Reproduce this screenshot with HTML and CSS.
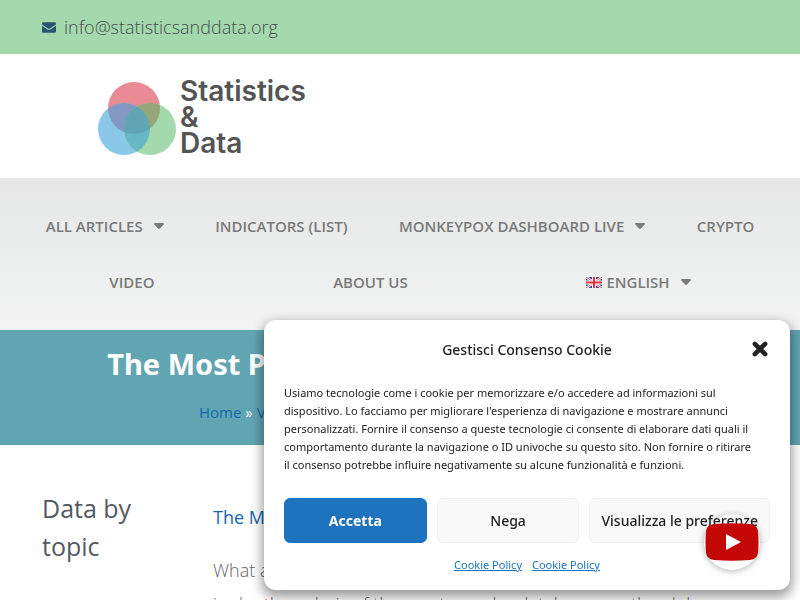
FILE: index.html
```html
<!DOCTYPE html>
<html lang="en">
<head>
<meta charset="utf-8">
<title>Statistics &amp; Data</title>
<link rel="stylesheet" href="styles.css">
</head>
<body>
<div class="page">
  <div class="topbar">
    <svg class="envelope" viewBox="0 0 512 384" aria-hidden="true"><path d="M48 0h416a48 48 0 0 1 48 48v32L290 226q-34 22-68 0L0 80V48A48 48 0 0 1 48 0zM0 128l206 138q50 32 100 0l206-138v208a48 48 0 0 1-48 48H48a48 48 0 0 1-48-48z"/></svg>
    <span>info@statisticsanddata.org</span>
  </div>
  <header class="brand">
    <svg class="brand-mark" viewBox="0 0 80 76" aria-hidden="true">
      <circle cx="37" cy="28" r="26" fill="#e98b95"/>
      <circle cx="27" cy="49" r="26" fill="#89c8e8"/>
      <circle cx="53" cy="49" r="26" fill="#a3d9ac"/>
      <clipPath id="red"><circle cx="37" cy="28" r="26"/></clipPath>
      <clipPath id="blue"><circle cx="27" cy="49" r="26"/></clipPath>
      <circle cx="27" cy="49" r="26" fill="#8399c3" clip-path="url(#red)"/>
      <circle cx="53" cy="49" r="26" fill="#96a679" clip-path="url(#red)"/>
      <g clip-path="url(#blue)">
        <circle cx="53" cy="49" r="26" fill="#66b9c4"/>
        <circle cx="53" cy="49" r="26" fill="#61a5b3" clip-path="url(#red)"/>
      </g>
    </svg>
    <div class="brand-name">Statistics<br>&amp;<br>Data</div>
  </header>
  <nav class="menu">
    <ul>
      <li><a href="#">ALL ARTICLES <svg class="caret" viewBox="0 0 10 6" aria-hidden="true"><path d="M1 0h8q1.500 .3.600 1.500L6 5.500q-1 .8-2 0L.4 1.500Q-.5.3 1 0z"/></svg></a></li>
      <li><a href="#">INDICATORS (LIST)</a></li>
      <li><a href="#">MONKEYPOX DASHBOARD LIVE <svg class="caret" viewBox="0 0 10 6" aria-hidden="true"><path d="M1 0h8q1.500.3.600 1.500L6 5.500q-1 .8-2 0L.4 1.500Q-.5.3 1 0z"/></svg></a></li>
      <li><a href="#">CRYPTO</a></li>
      <li><a href="#">VIDEO</a></li>
      <li><a href="#">ABOUT US</a></li>
      <li><a href="#"><svg class="flag" viewBox="0 0 16 11" aria-hidden="true"><path fill="#28489c" d="M0 0h16v11H0z"/><path stroke="#fff" stroke-width="2.600" d="M0 0l16 11M16 0L0 11"/><path stroke="#e0404c" stroke-width=".9" d="M0 0l16 11M16 0L0 11"/><path stroke="#fff" stroke-width="4" d="M8 0v11M0 5.500h16"/><path stroke="#e8303c" stroke-width="2" d="M8 0v11M0 5.500h16"/></svg>ENGLISH <svg class="caret" viewBox="0 0 10 6" aria-hidden="true"><path d="M1 0h8q1.500.3.600 1.500L6 5.500q-1 .8-2 0L.4 1.500Q-.5.3 1 0z"/></svg></a></li>
    </ul>
  </nav>
  <section class="hero">
    <h1>The Most Popular Databases – 2006/2023</h1>
    <p><a href="#">Home</a> » <a href="#">Video</a> » The Most Popular Databases – 2006/2023</p>
  </section>
  <main class="content">
    <aside><h2>Data by topic</h2></aside>
    <article>
      <p><a href="#">The Most Popular Databases – 2006/2023</a></p>
      <p>What are the most popular databases? An<br>in depth analysis of the most popular databases on the globe</p>
    </article>
  </main>
</div>

<div class="consent" role="dialog" aria-labelledby="consent-title">
  <div class="consent-head">
    <h2 id="consent-title">Gestisci Consenso Cookie</h2>
    <button class="close" type="button" aria-label="Chiudi"><svg viewBox="0 0 14 14" aria-hidden="true"><path d="M2.500 2.500l9 9M11.500 2.500l-9 9"/></svg></button>
  </div>
  <p class="consent-text">Usiamo tecnologie come i cookie per memorizzare e/o accedere ad informazioni sul<br>dispositivo. Lo facciamo per migliorare l'esperienza di navigazione e mostrare annunci<br>personalizzati. Fornire il consenso a queste tecnologie ci consente di elaborare dati quali il<br>comportamento durante la navigazione o ID univoche su questo sito. Non fornire o ritirare<br>il consenso potrebbe influire negativamente su alcune funzionalità e funzioni.</p>
  <div class="consent-actions">
    <button class="action accept" type="button">Accetta</button>
    <button class="action" type="button">Nega</button>
    <button class="action" type="button">Visualizza le preferenze</button>
  </div>
  <div class="consent-links"><a href="#">Cookie Policy</a><a href="#">Cookie Policy</a></div>
</div>

<a class="youtube" href="#" aria-label="YouTube">
  <svg viewBox="0 0 54 38" aria-hidden="true"><path fill="#c40808" d="M9 1Q27-.5 45 1q7 .5 8 7 1 11 0 22-1 6-8 7-18 1.500-36 0-7-1-8-7Q0 19 1 8q1-6.500 8-7z"/><path fill="#fff" d="M21 11l15 8-15 8z"/></svg>
</a>
</body>
</html>
```
FILE: styles.css
```css
* { box-sizing: border-box; }
body {
  margin: 0;
  font-family: "Open Sans", "Noto Sans", sans-serif;
  color: #7a7a7a;
  background: #fff;
}
h1, h2, p, ul { margin: 0; padding: 0; }
a { color: #1567b4; text-decoration: none; }
.page { height: 100vh; overflow: hidden; }

.topbar {
  display: flex;
  align-items: center;
  gap: 8px;
  height: 54px;
  padding: 0 42px;
  background: #a3d9ac;
  color: #484d53;
  font-size: 18px;
  font-weight: 300;
}
.envelope { width: 14px; height: 11px; fill: #2a5674; }

.brand {
  display: flex;
  align-items: flex-start;
  gap: 3px;
  height: 124px;
  padding: 26px 97px 0;
}
.brand-mark { width: 80px; height: 76px; }
.brand-name {
  color: #545454;
  font: 600 28px/26px Inter, sans-serif;
  margin-top: -2px;
}

.menu {
  padding: 20px;
  background: linear-gradient(#e6e6e6, #eceded 50%, #f3f3f3);
}
.menu ul { display: flex; flex-wrap: wrap; list-style: none; }
.menu li { flex: 1 1 auto; }
.menu a {
  display: flex;
  align-items: center;
  justify-content: center;
  height: 56px;
  padding: 0 24px;
  color: #7a7a7a;
  font-size: 15px;
  font-weight: 600;
  white-space: nowrap;
}
.caret { width: 10px; height: 6px; margin-left: 11px; fill: currentColor; }
.flag { width: 16px; height: 11px; margin-right: 4px; }

.hero {
  padding: 14px 20px 21px;
  background: #61a5b3;
  color: #fff;
  text-align: center;
  white-space: nowrap;
}
.hero h1 { font: 700 29px/40px "Noto Sans", sans-serif; }
.hero p { margin-top: 16px; font-size: 15px; line-height: 24px; }

.content {
  display: grid;
  grid-template-columns: 141px 1fr;
  gap: 30px;
  padding: 44px 42px 0;
}
.content h2 { font-size: 25px; font-weight: 400; line-height: 38px; color: #54595f; }
.content p { color: #666; font-size: 18px; font-weight: 300; line-height: 34px; margin-bottom: 19px; white-space: nowrap; }
.content article { padding-top: 11px; }
.content p a { font-weight: 400; }

.consent {
  position: fixed;
  right: 10px;
  bottom: 10px;
  width: 526px;
  padding: 14px 20px 16px;
  border-radius: 12px;
  background: #fff;
  box-shadow: 0 5px 12px 2px rgba(0, 0, 0, .4);
  color: #222;
  font-family: "Noto Sans", sans-serif;
}
.consent-head {
  display: grid;
  grid-template-columns: 20px 1fr 20px;
  align-items: center;
  height: 30px;
}
.consent-head h2 { grid-column: 2; text-align: center; font-size: 14px; font-weight: 500; }
.close { width: 20px; height: 20px; padding: 0; border: 0; background: none; }
.close svg { display: block; width: 16px; height: 16px; margin: 0 auto; }
.close path { stroke: #222; stroke-width: 4; stroke-linecap: round; }
.consent-text { margin-top: 20px; font-size: 11px; line-height: 18px; white-space: nowrap; }
.consent-actions {
  display: grid;
  grid-template-columns: 1fr 1fr auto;
  gap: 10px;
  margin-top: 24px;
}
.action {
  height: 45px;
  padding: 0 11px;
  border: 1px solid #f0f0f0;
  border-radius: 6px;
  background: #f9f9f9;
  color: #222;
  font: 500 14px "Noto Sans", sans-serif;
  white-space: nowrap;
}
.accept { border-color: #1e73be; background: #1e73be; color: #fff; font-weight: 700; }
.consent-links {
  display: flex;
  justify-content: center;
  gap: 10px;
  margin-top: 13px;
  font-size: 11px;
  line-height: 18px;
}
.consent-links a { color: #1e73be; text-decoration: underline; }

.youtube {
  position: fixed;
  right: 40px;
  bottom: 30px;
  display: grid;
  place-items: center;
  width: 56px;
  height: 56px;
  border-radius: 50%;
  box-shadow: 0 1px 7px rgba(0, 0, 0, .3);
}
.youtube svg { width: 54px; height: 38px; }
```
